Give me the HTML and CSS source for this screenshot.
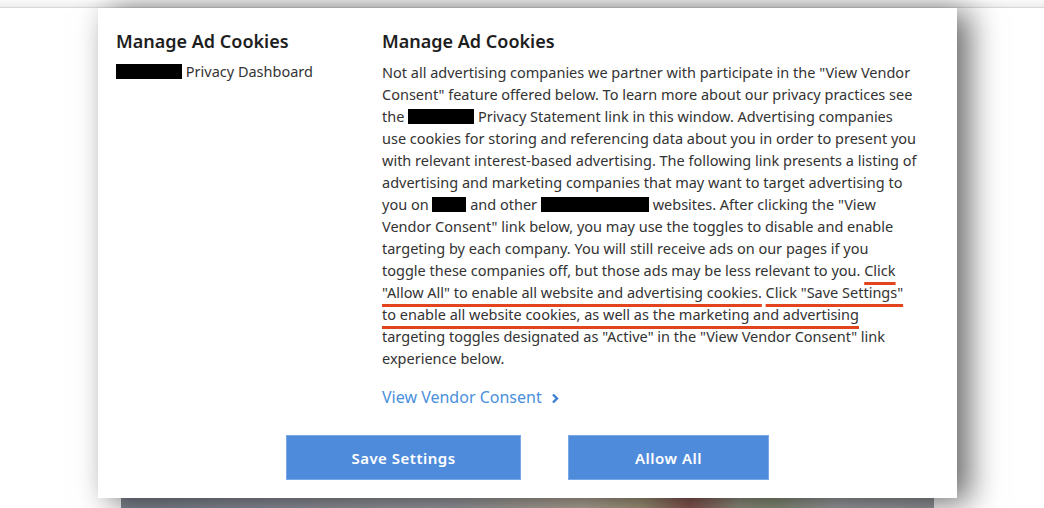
FILE: index.html
```html
<!DOCTYPE html>
<html lang="en">
<head>
    <meta charset="UTF-8">
    <meta name="viewport" content="width=device-width, initial-scale=1.0">
    <title>Manage Ad Cookies</title>
    <link rel="stylesheet" href="styles.css">
</head>
<body>
    <div class="topbar"></div>
    <div class="page">
        <div class="hero"></div>
    </div>

    <div class="modal">
        <div class="side">
            <h2>Manage Ad Cookies</h2>
            <div class="side-link"><span class="redact w66"></span> Privacy Dashboard</div>
        </div>
        <div class="main">
            <h2>Manage Ad Cookies</h2>
            <p class="body-text">
                Not all advertising companies we partner with participate in the "View Vendor<br>
                Consent" feature offered below. To learn more about our privacy practices see<br>
                the <span class="redact w66"></span> Privacy Statement link in this window. Advertising companies<br>
                use cookies for storing and referencing data about you in order to present you<br>
                with relevant interest-based advertising. The following link presents a listing of<br>
                advertising and marketing companies that may want to target advertising to<br>
                you on <span class="redact w34"></span> and other <span class="redact w108"></span> websites. After clicking the "View<br>
                Vendor Consent" link below, you may use the toggles to disable and enable<br>
                targeting by each company. You will still receive ads on our pages if you<br>
                toggle these companies off, but those ads may be less relevant to you. <span class="mark">Click</span><br>
                <span class="mark">"Allow All" to enable all website and advertising cookies.</span> <span class="mark">Click "Save Settings"</span><br>
                <span class="mark">to enable all website cookies, as well as the marketing and advertising</span><br>
                targeting toggles designated as "Active" in the "View Vendor Consent" link<br>
                experience below.
            </p>
            <a class="vendor-link" href="#">View Vendor Consent
                <svg class="chev" width="8" height="11" viewBox="0 0 8 11"><path d="M2 1.5 L6 5.5 L2 9.5" fill="none" stroke="#3b7fd0" stroke-width="2.4"/></svg>
            </a>
        </div>
        <div class="actions">
            <button class="btn save">Save Settings</button>
            <button class="btn allow">Allow All</button>
        </div>
    </div>
</body>
</html>
```

FILE: styles.css
```css
body {
    margin: 0;
    background-color: #fff;
    font-family: "Noto Sans", "Open Sans", sans-serif;
    color: #333;
    height: 508px;
    overflow: hidden;
}
.topbar {
    height: 7px;
    background: linear-gradient(#fafafa, #ececec);
    border-bottom: 1px solid #d8d8d8;
}
.page {
    width: 813px;
    margin: 0 auto;
    padding-left: 10px;
}
.hero {
    height: 500px;
    background: linear-gradient(90deg, #858a95 0%, #969aa3 20%, #a4a5aa 42%, #b3aca3 50%, #bdb2a2 57%, #a99e80 64%, #8f5a55 70%, #9a9a8a 76%, #8f987e 80%, #a5a7ab 88%, #9a9ca1 100%);
}
.modal {
    position: absolute;
    left: 98px;
    top: 8px;
    width: 859px;
    height: 490px;
    box-sizing: border-box;
    background-color: #fff;
    box-shadow: 12px 4px 30px rgba(0, 0, 0, 0.6);
    display: grid;
    grid-template-columns: 266px 1fr;
    grid-template-rows: 1fr auto;
    padding: 20px 30px 18px 18px;
}
h2 {
    margin: 0 0 8px;
    font-size: 18px;
    font-weight: 600;
    color: #1e1e1e;
    line-height: 26px;
}
.side-link {
    font-size: 14.5px;
    line-height: 22px;
    color: #333;
    margin-top: -2px;
}
.redact {
    display: inline-block;
    height: 15px;
    background-color: #000;
    vertical-align: -2px;
}
.w66 { width: 66px; }
.w34 { width: 34px; }
.w108 { width: 108px; }
.body-text {
    margin: 0;
    font-size: 14.5px;
    line-height: 22px;
    white-space: nowrap;
    margin-top: -1px;
}
.mark {
    text-decoration: underline;
    text-decoration-color: #e2451d;
    text-decoration-thickness: 3px;
    text-underline-offset: 6px;
}
.vendor-link {
    display: inline-block;
    margin-top: 17px;
    font-size: 16px;
    color: #4a8fdc;
    text-decoration: none;
}
.chev {
    margin-left: 5px;
    vertical-align: -1px;
}
.actions {
    grid-column: 1 / 3;
    display: flex;
    justify-content: center;
    gap: 47px;
    padding-left: 12px;
}
.btn {
    height: 45px;
    border: 1px solid #7aa8e6;
    background-color: #4f8bdb;
    color: #fff;
    font-family: "Noto Sans", "Open Sans", sans-serif;
    font-size: 15px;
    font-weight: 600;
    letter-spacing: 0.5px;
    cursor: pointer;
}
.save { width: 235px; }
.allow { width: 201px; }
```
